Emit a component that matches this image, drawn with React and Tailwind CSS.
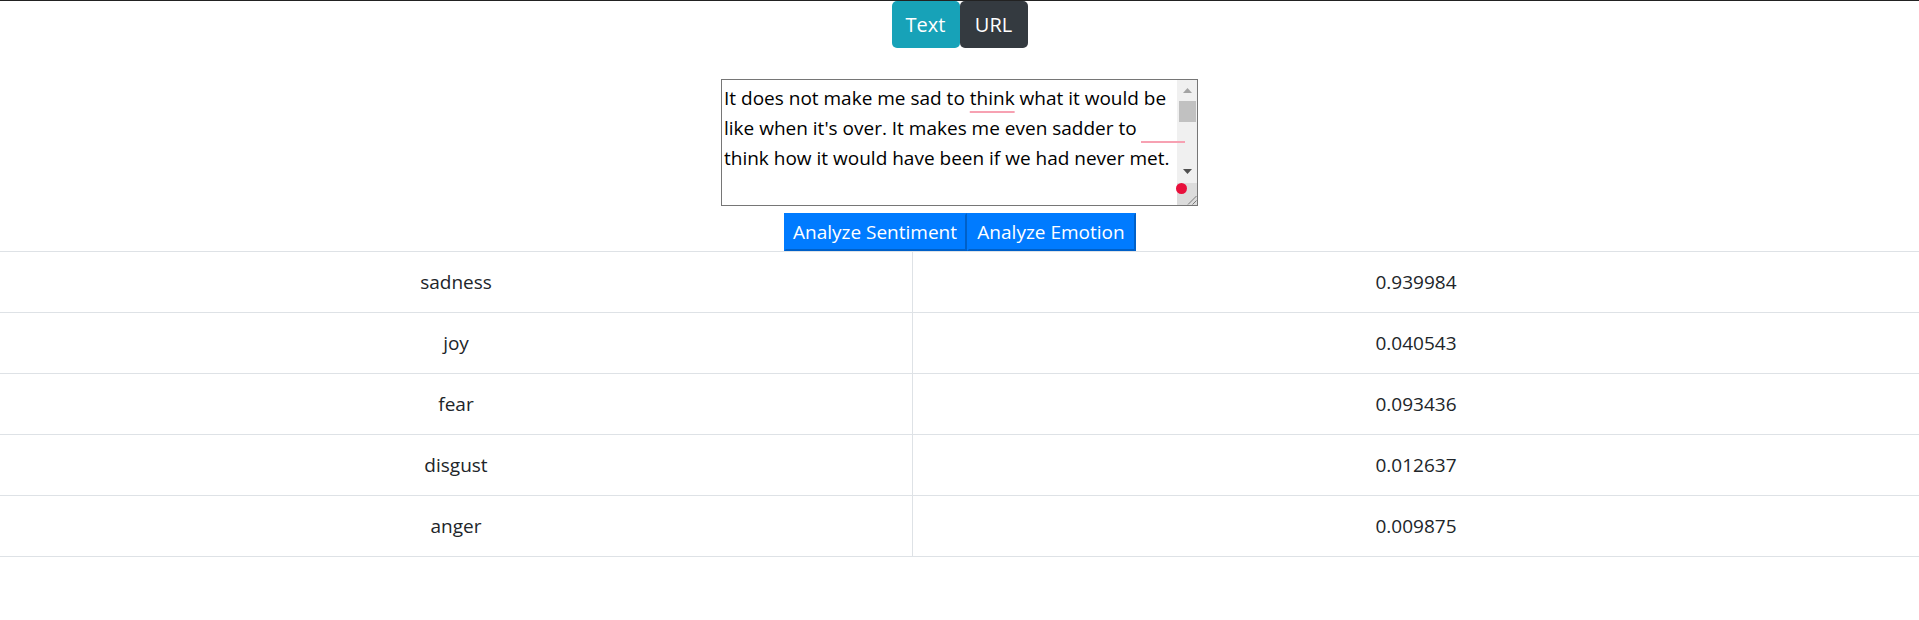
import React from 'react';

const EMOTIONS = [
  ['sadness', '0.939984'],
  ['joy', '0.040543'],
  ['fear', '0.093436'],
  ['disgust', '0.012637'],
  ['anger', '0.009875'],
];

const FakeScrollbar = () => (
  <div className="flex flex-col w-[20px] bg-[#f0f0f0]">
    <div className="h-[20px] flex items-center justify-center">
      <svg width="9" height="5" viewBox="0 0 9 5" aria-hidden>
        <path d="M0 5 L4.5 0 L9 5 Z" fill="#a3a3a3" />
      </svg>
    </div>
    <div className="flex-1 flex flex-col">
      <div className="h-[21px] mt-[1px] ml-[2px] mr-[1px] bg-[#c1c1c1]" />
    </div>
    <div className="h-[18px] flex items-start justify-center pt-[4px]">
      <svg width="9" height="5" viewBox="0 0 9 5" aria-hidden>
        <path d="M0 0 L4.5 5 L9 0 Z" fill="#505050" />
      </svg>
    </div>
    <div className="h-[22px] bg-[#dcdcdc] flex items-end justify-end">
      <svg width="11" height="11" viewBox="0 0 11 11" aria-hidden>
        <path d="M10.5 2 L2 10.5 M10.5 6.5 L6.5 10.5" stroke="#7a7a7a" strokeWidth="1" />
      </svg>
    </div>
  </div>
);

export default function App() {
  return (
    <div className="min-h-screen bg-white border-t border-[#222] font-['Open_Sans',sans-serif] text-[#212529]">
      <div className="flex justify-center">
        <button className="w-[68px] h-[47px] rounded-[5px] bg-[#17a2b8] text-white text-[20px]">Text</button>
        <button className="w-[68px] h-[47px] rounded-[5px] bg-[#343a40] text-white text-[20px]">URL</button>
      </div>

      <div className="flex justify-center mt-[31px]">
        <div className="relative flex w-[477px] h-[127px] border border-[#767676] bg-white">
          <div className="flex-1 overflow-hidden pt-[3px] pl-[2px] text-[19px] leading-[30px] text-black">
            <div className="whitespace-nowrap">
              It does not make me sad to{' '}
              <span className="underline decoration-[#f7a1b2] decoration-2 underline-offset-[6px]">think</span>{' '}
              what it would be
            </div>
            <div className="whitespace-nowrap">like when it's over. It makes me even sadder to</div>
            <div className="whitespace-nowrap">think how it would have been if we had never met.</div>
          </div>
          <FakeScrollbar />
          <span className="absolute left-[419px] top-[61px] w-[44px] h-[2px] bg-[#f7a1b2]" />
          <span className="absolute left-[454px] top-[103px] w-[11px] h-[11px] rounded-full bg-[#e8103c]" />
        </div>
      </div>

      <div className="flex justify-center mt-[7px]">
        <button className="w-[183px] h-[38px] bg-[#007bff] text-white text-[19px] border-2 border-[#007bff] border-r-[#0060c8] border-b-[#0060c8] leading-none">
          Analyze Sentiment
        </button>
        <button className="w-[169px] h-[38px] bg-[#007bff] text-white text-[19px] border-2 border-[#007bff] border-r-[#0060c8] border-b-[#0060c8] leading-none">
          Analyze Emotion
        </button>
      </div>

      <div className="border-t border-[#dee2e6] text-[19px]">
        {EMOTIONS.map(([name, score]) => (
          <div key={name} className="grid grid-cols-[913px_1fr] h-[61px] border-b border-[#dee2e6]">
            <div className="flex items-center justify-center border-r border-[#dee2e6]">{name}</div>
            <div className="flex items-center justify-center">{score}</div>
          </div>
        ))}
      </div>
    </div>
  );
}
